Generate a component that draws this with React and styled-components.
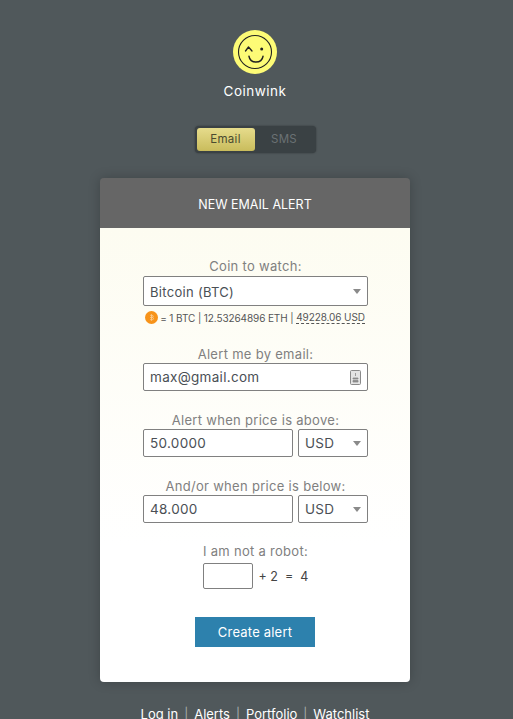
import React from 'react'
import styled, { createGlobalStyle } from 'styled-components'

const FONT = `Inter, "Noto Sans", "Liberation Sans", sans-serif`

const GlobalStyle = createGlobalStyle`
  html, body {
    margin: 0;
    padding: 0;
    height: 719px;
    overflow: hidden;
    background-color: #50585b;
    font-family: ${FONT};
  }
`
const Page = styled.div`
  display: flex;
  flex-direction: column;
  align-items: center;
  padding: 30px 3px 0 0;
`
const Logo = styled.svg`
  display: block;
  width: 44px;
  height: 44px;
`
const Brand = styled.div`
  margin-top: 9px;
  height: 16px;
  line-height: 16px;
  font-size: 13.5px;
  letter-spacing: 0.5px;
  color: #fff;
`
const Toggle = styled.div`
  display: flex;
  margin-top: 27px;
  padding: 2px;
  width: 121px;
  height: 27px;
  box-sizing: border-box;
  background-color: #3a4144;
  border-radius: 4px;
  box-shadow: 0 0 2px rgba(0, 0, 0, .4);
`
const ToggleItem = styled.div`
  width: ${props => props.$active ? '58px' : '59px'};
  line-height: 23px;
  text-align: center;
  font-size: 11.5px;
  font-weight: 400;
  letter-spacing: 0.3px;
  border-radius: 3px;
  color: ${props => props.$active ? '#4a4a30' : '#6b7174'};
  background: ${props => props.$active ? 'linear-gradient(#e6dc8c, #c9bc5c)' : 'transparent'};
`
const Card = styled.div`
  margin-top: 25px;
  width: 310px;
  height: 504px;
  border-radius: 4px;
  overflow: hidden;
  box-shadow: 0 0 12px rgba(0, 0, 0, .22);
`
const CardHeader = styled.div`
  height: 50px;
  line-height: 53px;
  text-align: center;
  font-size: 12.5px;
  font-weight: 400;
  color: #fff;
  background-color: #666;
`
const Form = styled.div`
  height: 454px;
  box-sizing: border-box;
  padding: 31px 42px 0 43px;
  background: linear-gradient(#fdfcf1, #fff 70%);
`
const Field = styled.div`
  margin-bottom: ${props => props.$gap || '20px'};
`
const Label = styled.div`
  height: ${props => props.$height || '17px'};
  line-height: ${props => props.$line || '17px'};
  text-align: center;
  font-size: 13px;
  letter-spacing: 0.3px;
  color: #808080;
`
const Row = styled.div`
  display: flex;
  justify-content: space-between;
`
const Box = styled.div`
  display: flex;
  align-items: center;
  justify-content: space-between;
  box-sizing: border-box;
  width: ${props => props.$width || '100%'};
  height: ${props => props.$height || '28px'};
  padding: ${props => props.$height === '30px' ? '1px 6px 0' : '0 6px'};
  background-color: #fff;
  border: 1px solid #808080;
  border-radius: 2px;
  font-size: ${props => props.$size || '13.5px'};
  letter-spacing: 0.3px;
  color: #4a4f55;
`
const Arrow = styled.span`
  width: 0;
  height: 0;
  border-left: 4px solid transparent;
  border-right: 4px solid transparent;
  border-top: 5px solid #8a8a8a;
`
const Info = styled.div`
  display: flex;
  align-items: center;
  justify-content: center;
  margin-top: 3px;
  padding-right: 1px;
  height: 17px;
  font-size: 10px;
  letter-spacing: -0.1px;
  color: #555;
  white-space: pre;
`
const CoinIcon = styled.svg`
  flex-shrink: 0;
  width: 13px;
  height: 13px;
  margin-right: 2px;
`
const Price = styled.span`
  border-bottom: 1px dashed #555;
  line-height: 12px;
`
const Captcha = styled.div`
  display: flex;
  align-items: center;
  justify-content: center;
  gap: 6px;
  font-size: 12.5px;
  color: #444;
  white-space: pre;
`
const Submit = styled.button`
  display: block;
  margin: 28px 0 0 52px;
  width: 120px;
  height: 30px;
  border: 0;
  padding: 0;
  background-color: #2d81ad;
  color: #fff;
  font-family: ${FONT};
  font-size: 13px;
  letter-spacing: 0.2px;
`
const FooterNav = styled.div`
  display: flex;
  align-items: center;
  gap: 6px;
  margin-top: 24px;
  line-height: 16px;
  font-size: 13px;
  color: #fff;
`
const Divider = styled.span`
  color: #a9adae;
  font-size: 12px;
`

const UsdSelect = () => (
  <Box $width="70px">USD<Arrow /></Box>
)

const App = () => {
  return (
    <Page>
      <GlobalStyle />
      <Logo viewBox="0 0 44 44">
        <circle cx="22" cy="22" r="22" fill="#fdfb76" />
        <circle cx="22" cy="22" r="16.5" fill="none" stroke="#222" strokeWidth="1.1" />
        <path d="M12.5 21 L15.5 17 L19 21" fill="none" stroke="#222" strokeWidth="1.3" strokeLinecap="round" strokeLinejoin="round" />
        <circle cx="28.7" cy="19" r="1.5" fill="#222" />
        <path d="M16 26.3 Q17 32 23 32 Q29 32 30 26.3" fill="none" stroke="#222" strokeWidth="1.5" strokeLinecap="round" />
      </Logo>
      <Brand>Coinwink</Brand>
      <Toggle>
        <ToggleItem $active>Email</ToggleItem>
        <ToggleItem>SMS</ToggleItem>
      </Toggle>
      <Card>
        <CardHeader>NEW EMAIL ALERT</CardHeader>
        <Form>
          <Field $gap="20px">
            <Label $line="15px">Coin to watch:</Label>
            <Box $height="30px" $size="13px">Bitcoin (BTC)<Arrow /></Box>
            <Info>
              <CoinIcon viewBox="0 0 12 12">
                <circle cx="6" cy="6" r="6" fill="#f7931a" />
                <path d="M6 3v6M4.8 4h1.8a1 1 0 0 1 0 2H5m0 0h1.8a1 1 0 0 1 0 2H4.8" fill="none" stroke="#fbc98a" strokeWidth="0.9" />
              </CoinIcon>
              = 1 BTC | 12.53264896 ETH | <Price>49228.06 USD</Price>
            </Info>
          </Field>
          <Field $gap="21px">
            <Label>Alert me by email:</Label>
            <Box>
              max@gmail.com
              <svg width="11" height="15" viewBox="0 0 11 15">
                <rect x="0.5" y="0.5" width="10" height="14" rx="1" fill="#e4e4e4" stroke="#8a8a8a" />
                <path d="M5.5 3v3M3 8h5v1H3zM3 10.5h5v1.5H3z" fill="#8a8a8a" stroke="#8a8a8a" strokeWidth="0.8" />
              </svg>
            </Box>
          </Field>
          <Field $gap="21px">
            <Label>Alert when price is above:</Label>
            <Row>
              <Box $width="150px">50.0000</Box>
              <UsdSelect />
            </Row>
          </Field>
          <Field $gap="20px">
            <Label>And/or when price is below:</Label>
            <Row>
              <Box $width="150px">48.000</Box>
              <UsdSelect />
            </Row>
          </Field>
          <Label $height="20px">I am not a robot:</Label>
          <Captcha>
            <Box $width="50px" $height="26px" />
            <span>+ 2  =  4</span>
          </Captcha>
          <Submit>Create alert</Submit>
        </Form>
      </Card>
      <FooterNav>
        <span>Log in</span><Divider>|</Divider>
        <span>Alerts</span><Divider>|</Divider>
        <span>Portfolio</span><Divider>|</Divider>
        <span>Watchlist</span>
      </FooterNav>
    </Page>
  )
}

export default App
